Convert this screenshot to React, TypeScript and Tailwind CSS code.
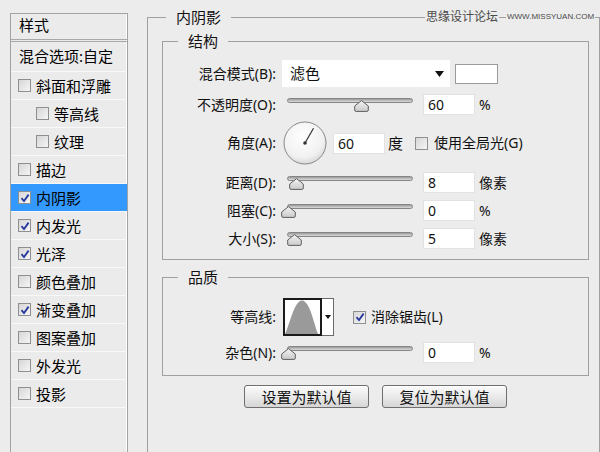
import React from 'react';

const font = "font-['Noto_Sans','Noto_Sans_CJK_SC',sans-serif]";

const styles = [
  { label: '斜面和浮雕', checked: false, sub: false },
  { label: '等高线', checked: false, sub: true },
  { label: '纹理', checked: false, sub: true },
  { label: '描边', checked: false, sub: false },
  { label: '内阴影', checked: true, sub: false, active: true },
  { label: '内发光', checked: true, sub: false },
  { label: '光泽', checked: true, sub: false },
  { label: '颜色叠加', checked: false, sub: false },
  { label: '渐变叠加', checked: true, sub: false },
  { label: '图案叠加', checked: false, sub: false },
  { label: '外发光', checked: false, sub: false },
  { label: '投影', checked: false, sub: false },
];

const Check = ({ checked }: { checked: boolean }) => (
  <span className="w-[13px] h-[13px] shrink-0 border border-[#8e8f8f] bg-linear-to-br from-[#d6d6d6] to-[#f6f6f6] flex items-center justify-center">
    {checked && (
      <svg width="10" height="10" viewBox="0 0 10 10">
        <path d="M1.5 5.2 L4 8 L8.6 1.6" fill="none" stroke="#26379c" strokeWidth="1.8" />
      </svg>
    )}
  </span>
);

const Thumb = () => (
  <svg width="15" height="12" viewBox="0 0 15 12">
    <defs>
      <linearGradient id="tg" x1="0" y1="0" x2="0" y2="1">
        <stop offset="0" stopColor="#f4f4f4" />
        <stop offset="1" stopColor="#c9c9c9" />
      </linearGradient>
    </defs>
    <path d="M7.5 0.6 L14.3 6 L14.3 10 Q14.3 11.4 12.9 11.4 L2.1 11.4 Q0.7 11.4 0.7 10 L0.7 6 Z" fill="url(#tg)" stroke="#5f5f5f" strokeWidth="1" />
  </svg>
);

const Slider = ({ at }: { at: number }) => (
  <div className="relative w-[126px] h-[21px] ml-[11px] shrink-0">
    <div className="mt-[4px] h-[5px] rounded-full border border-[#858585] bg-linear-to-b from-[#9b9b9b] to-[#dcdcdc]" />
    <div className="absolute top-[6px]" style={{ left: at }}>
      <Thumb />
    </div>
  </div>
);

const NumBox = ({ value, ml = 10 }: { value: string; ml?: number }) => (
  <div
    className="w-[52px] h-[21px] bg-white border border-[#e2e2e2] text-[14px] leading-[19px] pl-[4px] text-[#111] shrink-0"
    style={{ marginLeft: ml }}
  >
    {value}
  </div>
);

const Label = ({ children }: { children: React.ReactNode }) => (
  <div className="w-[113px] shrink-0 text-right text-[14px] leading-[18px] text-[#111]">{children}</div>
);

const Unit = ({ children }: { children: React.ReactNode }) => (
  <span className="ml-[4px] text-[14px] leading-[18px] text-[#111]">{children}</span>
);

const SliderRow = ({ label, at, value, unit, mt = 7 }: { label: string; at: number; value: string; unit: string; mt?: number }) => (
  <div className="flex items-center h-[21px]" style={{ marginTop: mt }}>
    <Label>{label}</Label>
    <Slider at={at} />
    <NumBox value={value} />
    <Unit>{unit}</Unit>
  </div>
);

const Button = ({ children }: { children: React.ReactNode }) => (
  <button className="w-[125px] h-[23px] rounded-[3px] border border-[#6f6f6f] bg-linear-to-b from-[#fafafa] via-[#eaeaea] to-[#d6d6d6] text-[15px] leading-[20px] text-[#111] shadow-[inset_0_1px_0_#ffffff]">
    {children}
  </button>
);

export default function App() {
  return (
    <div className={`relative w-[600px] h-[452px] overflow-hidden bg-[#ececec] flex items-start ${font}`}>
      {/* left list */}
      <div className="ml-[10px] mt-[13px] w-[118px] h-[450px] shrink-0 border border-[#a2a2a2] bg-[#ebebeb] shadow-[inset_-1px_0_0_#ffffff]">
        <div className="h-[28px] pl-[8px] text-[15px] leading-[20px] pt-[1px] text-black border-b-[3px] border-double border-[#a8a8a8]">样式</div>
        <div className="h-[30px] pl-[8px] flex items-center text-[15px] text-black border-b border-[#f8f8f8]">
          混合选项:自定
        </div>
        {styles.map((s) => (
          <div
            key={s.label}
            className={`h-[28px] flex items-center border-b border-[#f8f8f8] text-[15px] text-black ${s.active ? 'bg-[#3399ff]' : ''}`}
            style={{ paddingLeft: s.sub ? 25 : 7 }}
          >
            <Check checked={s.checked} />
            <span className="ml-[5px] leading-[18px]">{s.label}</span>
          </div>
        ))}
      </div>

      {/* main group */}
      <fieldset className="ml-[19px] mt-[8px] w-[453px] h-[460px] shrink-0 border border-[#a0a0a0] pl-[14px] pr-[10px] pt-[6px]">
        <legend className="ml-[4px] px-[10px] text-[15px] leading-[18px] text-[#111]">内阴影</legend>

        <fieldset className="border border-[#a0a0a0] pb-[10px]">
          <legend className="ml-[15px] px-[10px] text-[15px] leading-[18px] text-[#111]">结构</legend>

          <div className="mt-[10px] flex items-center h-[27px]">
            <Label>混合模式(B):</Label>
            <div className="ml-[6px] w-[168px] h-[27px] bg-white flex items-center justify-between pl-[8px] pr-[6px] text-[15px] text-[#111]">
              <span>滤色</span>
              <svg width="9" height="6" viewBox="0 0 9 6">
                <path d="M0 0 H9 L4.5 6 Z" fill="#111" />
              </svg>
            </div>
            <div className="ml-[5px] w-[43px] h-[20px] bg-white border border-[#9a9a9a]" />
          </div>

          <SliderRow label="不透明度(O):" at={67} value="60" unit="%" mt={7} />

          <div className="mt-[6px] flex items-center h-[44px]">
            <Label>角度(A):</Label>
            <svg className="ml-[7px] shrink-0" width="44" height="44" viewBox="0 0 44 44">
              <defs>
                <radialGradient id="dg" cx="0.45" cy="0.35" r="0.7">
                  <stop offset="0" stopColor="#ffffff" />
                  <stop offset="0.7" stopColor="#f1f1f1" />
                  <stop offset="1" stopColor="#d2d2d2" />
                </radialGradient>
              </defs>
              <circle cx="22" cy="22" r="21" fill="url(#dg)" stroke="#8a8a8a" strokeWidth="1" />
              <line x1="22" y1="22" x2="30.5" y2="7.3" stroke="#333" strokeWidth="1.2" />
              <circle cx="22" cy="22" r="1.8" fill="#333" />
            </svg>
            <NumBox value="60" ml={6} />
            <span className="ml-[3px] text-[15px] leading-[18px] text-[#111]">度</span>
            <span className="ml-[12px]">
              <Check checked={false} />
            </span>
            <span className="ml-[6px] text-[14px] leading-[18px] text-[#111]">使用全局光(G)</span>
          </div>

          <SliderRow label="距离(D):" at={2} value="8" unit="像素" mt={7} />
          <SliderRow label="阻塞(C):" at={-6} value="0" unit="%" mt={7} />
          <SliderRow label="大小(S):" at={0} value="5" unit="像素" mt={7} />
        </fieldset>

        <fieldset className="mt-[8px] border border-[#a0a0a0] pb-[12px]">
          <legend className="ml-[15px] px-[10px] text-[15px] leading-[18px] text-[#111]">品质</legend>

          <div className="mt-[12px] flex items-center h-[38px]">
            <Label>等高线:</Label>
            <div className="ml-[7px] flex h-[38px] shrink-0">
              <svg width="39" height="38" viewBox="0 0 35 34" preserveAspectRatio="none" className="bg-white border-2 border-[#1a1a1a]">
                <path d="M0 34 C 5 24, 9 1, 17 0.5 C 25 1, 29 24, 33 34 Z" fill="#9a9a9a" />
              </svg>
              <div className="w-[12px] h-[38px] bg-white border border-l-0 border-[#6a6a6a] flex items-center justify-center">
                <svg width="6" height="4" viewBox="0 0 6 4">
                  <path d="M0 0 H6 L3 4 Z" fill="#111" />
                </svg>
              </div>
            </div>
            <span className="ml-[19px]">
              <Check checked />
            </span>
            <span className="ml-[5px] text-[14px] leading-[18px] text-[#111]">消除锯齿(L)</span>
          </div>

          <SliderRow label="杂色(N):" at={-6} value="0" unit="%" mt={6} />
        </fieldset>

        <div className="mt-[9px] flex justify-center gap-[13px]">
          <Button>设置为默认值</Button>
          <Button>复位为默认值</Button>
        </div>
      </fieldset>

      {/* watermark */}
      <div className="absolute top-[9px] left-[425px] flex items-center text-[#4a4a4a]">
        <span className="bg-[#ececec] px-[1px] text-[12px] leading-[16px]">思缘设计论坛</span>
        <span className="ml-[7px] bg-[#ececec] px-[1px] text-[8px] leading-[16px] font-['Liberation_Sans',sans-serif]">WWW.MISSYUAN.COM</span>
      </div>
    </div>
  );
}
